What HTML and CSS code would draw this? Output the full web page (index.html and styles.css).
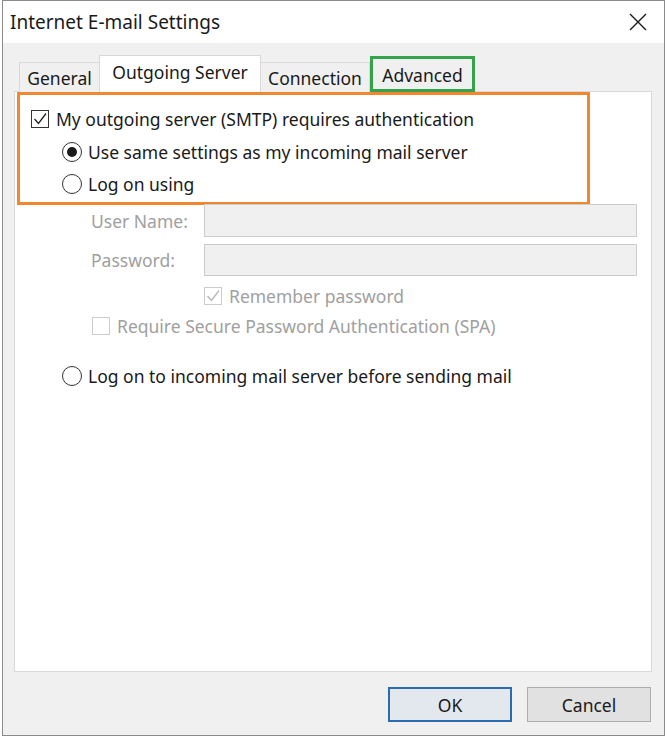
FILE: index.html
```html
<!DOCTYPE html>
<html>
<head>
    <title>Internet E-mail Settings</title>
    <link rel="stylesheet" href="styles.css">
</head>
<body>
    <div class="window">
        <div class="titlebar">
            <span class="title">Internet E-mail Settings</span>
            <span class="close">
                <svg width="18" height="18" viewBox="0 0 18 18"><path d="M1 1 L17 17 M17 1 L1 17" stroke="#1a1a1a" stroke-width="1.4" fill="none"/></svg>
            </span>
        </div>

        <div class="dialog-body">
            <div class="tabs">
                <div class="tab general">General</div>
                <div class="tab active">Outgoing Server</div>
                <div class="tab connection">Connection</div>
                <div class="tab highlight">Advanced</div>
            </div>

            <div class="panel">
                <div class="callout">
                    <label class="option auth">
                        <span class="checkbox"><svg width="16" height="16" viewBox="0 0 16 16"><path d="M2.5 8 L6.5 12.5 L14 2.5" stroke="#222" stroke-width="1.3" fill="none"/></svg></span>
                        My outgoing server (SMTP) requires authentication
                    </label>
                    <label class="option sub same">
                        <span class="radio selected"></span>
                        Use same settings as my incoming mail server
                    </label>
                    <label class="option sub logon">
                        <span class="radio"></span>
                        Log on using
                    </label>
                </div>

                <div class="login-fields">
                    <span class="field-label">User Name:</span>
                    <div class="textbox"></div>
                    <span class="field-label">Password:</span>
                    <div class="textbox"></div>
                    <span></span>
                    <label class="option disabled">
                        <span class="checkbox"><svg width="16" height="16" viewBox="0 0 16 16"><path d="M2.5 8 L6.5 12.5 L14 2.5" stroke="#b5b5b5" stroke-width="1.3" fill="none"/></svg></span>
                        Remember password
                    </label>
                </div>

                <label class="option disabled spa">
                    <span class="checkbox"></span>
                    Require Secure Password Authentication (SPA)
                </label>

                <label class="option before-send">
                    <span class="radio"></span>
                    Log on to incoming mail server before sending mail
                </label>
            </div>

            <div class="buttons">
                <button class="default">OK</button>
                <button>Cancel</button>
            </div>
        </div>
    </div>
</body>
</html>
```

FILE: styles.css
```css
* {
    box-sizing: border-box;
}

body {
    margin: 0;
    font-family: "Noto Sans", sans-serif;
    font-size: 17.5px;
    color: #1a1a1a;
    background: #ffffff;
}

.window {
    margin: 0 2px;
    height: 736px;
    border: 1px solid #8a8a8a;
    display: flex;
    flex-direction: column;
}

.titlebar {
    height: 42px;
    background: #ffffff;
    display: flex;
    align-items: center;
    justify-content: space-between;
    padding: 0 17px 0 7px;
}

.title {
    font-size: 19px;
}

.close svg {
    display: block;
}

.dialog-body {
    flex: 1;
    background: #f0f0f0;
    padding: 13px 12px 13px 11px;
    display: flex;
    flex-direction: column;
}

/* tabs */
.tabs {
    display: flex;
    align-items: flex-end;
    padding-left: 5px;
    height: 36px;
    margin-bottom: -1px;
}

.tab {
    height: 30px;
    display: flex;
    align-items: center;
    justify-content: center;
    border: 1px solid #d9d9d9;
    border-bottom: none;
    background: #f0f0f0;
    position: relative;
    white-space: nowrap;
}

.tab.general {
    width: 81px;
}

.tab.connection {
    width: 110px;
}

.tab.active {
    width: 162px;
    height: 37px;
    padding-bottom: 4px;
    margin: 0 -1px;
    background: #ffffff;
    z-index: 1;
}

.tab.highlight {
    width: 105px;
    height: 36px;
    padding-top: 2px;
    border: 3px solid #35a24c;
    z-index: 2;
}

/* panel */
.panel {
    flex: 1;
    background: #ffffff;
    border: 1px solid #d9d9d9;
}

.callout {
    width: 573px;
    margin-left: 2px;
    border: 3px solid #f2872f;
    padding-top: 8px;
    padding-bottom: 3px;
}

.option {
    display: flex;
    align-items: center;
    height: 32px;
    white-space: nowrap;
}

.option.auth {
    padding-left: 11px;
}

.option.sub {
    padding-left: 42px;
}

.option.same {
    height: 33px;
}

.option.logon {
    height: 31px;
}

.checkbox {
    width: 18px;
    height: 18px;
    flex-shrink: 0;
    border: 1px solid #333333;
    margin-right: 7px;
    display: flex;
    align-items: center;
    justify-content: center;
    background: #ffffff;
}

.radio {
    width: 20px;
    height: 20px;
    flex-shrink: 0;
    border: 1.5px solid #333333;
    border-radius: 50%;
    margin-right: 6px;
    display: flex;
    align-items: center;
    justify-content: center;
}

.radio.selected::after {
    content: "";
    width: 10px;
    height: 10px;
    border-radius: 50%;
    background: #1a1a1a;
}

.option.disabled {
    color: #a0a0a0;
}

.option.disabled .checkbox {
    border-color: #cccccc;
}

.login-fields {
    margin-top: -1px;
    display: grid;
    grid-template-columns: 113px 1fr;
    grid-template-rows: 33px 32px 26px;
    row-gap: 7px;
    padding: 0 14px 0 76px;
}

.field-label {
    color: #a0a0a0;
    display: flex;
    align-items: center;
}

.textbox {
    background: #f0f0f0;
    border: 1px solid #cccccc;
}

.login-fields .option {
    height: 26px;
}

.option.spa {
    margin-top: 1px;
    padding-left: 77px;
}

.option.before-send {
    margin-top: 18px;
    padding-left: 47px;
}

/* footer */
.buttons {
    display: flex;
    justify-content: flex-end;
    gap: 15px;
    margin-top: 15px;
    padding-right: 1px;
}

button {
    width: 124px;
    height: 35px;
    font-family: "Noto Sans", sans-serif;
    font-size: 17.5px;
    color: #1a1a1a;
    background: #e1e1e1;
    border: 1px solid #adadad;
}

button.default {
    border: 2px solid #2b6cb0;
    background: #e3e8ee;
}
```
